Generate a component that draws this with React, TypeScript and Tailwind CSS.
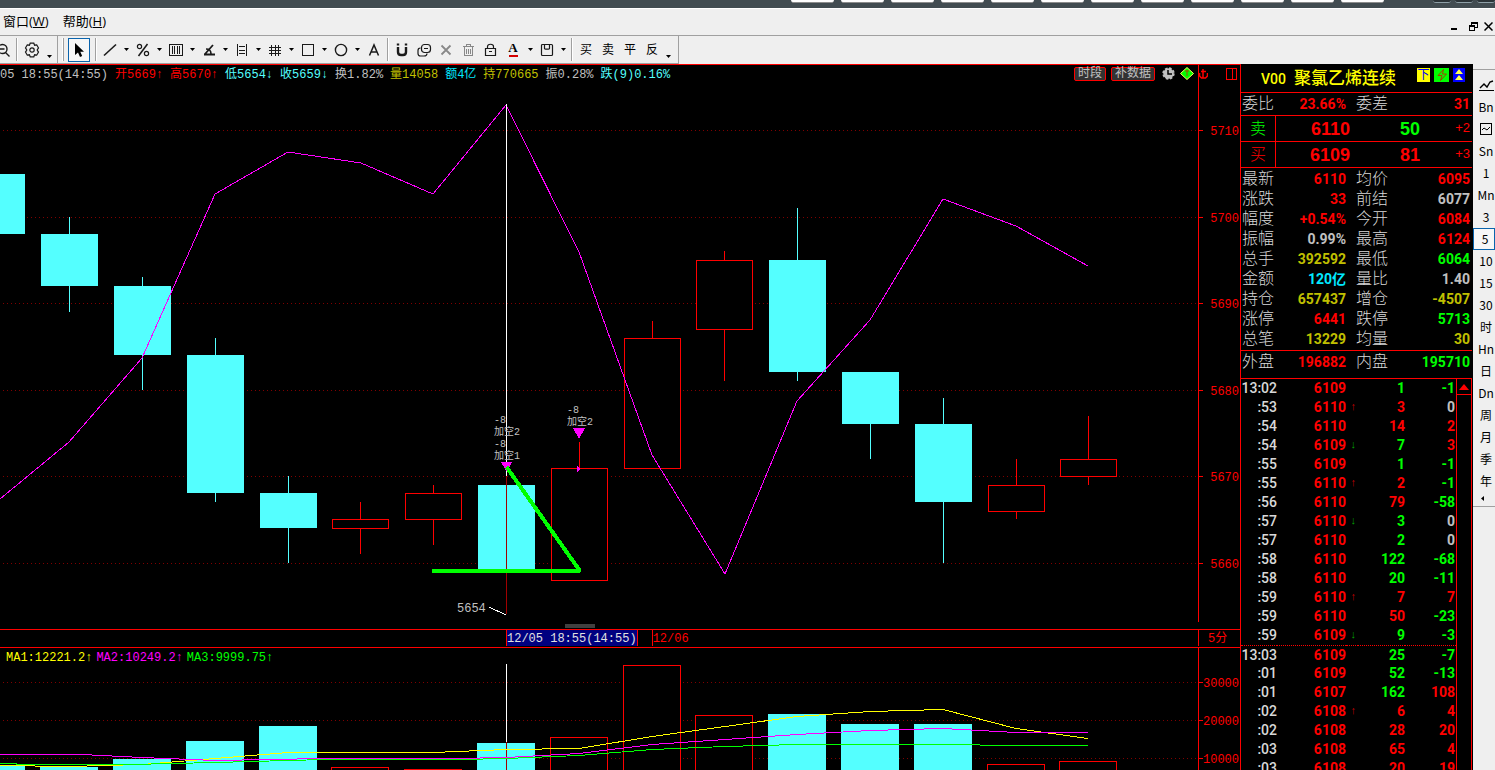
import React from "react";

type Candle = {
  open: number;
  high: number;
  low: number;
  close: number;
  volume: number;
};

const candles: Candle[] = [
  { open: 5705, high: 5705, low: 5698, close: 5698, volume: 8160 },
  { open: 5698, high: 5700, low: 5689, close: 5692, volume: 7630 },
  { open: 5692, high: 5693, low: 5680, close: 5684, volume: 9740 },
  { open: 5684, high: 5686, low: 5667, close: 5668, volume: 14470 },
  { open: 5668, high: 5670, low: 5660, close: 5664, volume: 18420 },
  { open: 5664, high: 5667, low: 5661, close: 5665, volume: 7630 },
  { open: 5665, high: 5669, low: 5662, close: 5668, volume: 7100 },
  { open: 5669, high: 5669, low: 5659, close: 5659, volume: 14058 },
  { open: 5658, high: 5674, low: 5658, close: 5671, volume: 15530 },
  { open: 5671, high: 5688, low: 5671, close: 5686, volume: 34500 },
  { open: 5687, high: 5696, low: 5681, close: 5695, volume: 21320 },
  { open: 5695, high: 5701, low: 5681, close: 5682, volume: 21580 },
  { open: 5682, high: 5682, low: 5672, close: 5676, volume: 18950 },
  { open: 5676, high: 5679, low: 5660, close: 5667, volume: 18950 },
  { open: 5666, high: 5672, low: 5665, close: 5669, volume: 8420 },
  { open: 5670, high: 5677, low: 5669, close: 5672, volume: 9210 },
];

const candleX = (i: number) => Math.round(72.8 * i - 3.6);
const priceY = (price: number) => Math.round(48.45 + (5710 - price) * 8.643);
const volumeY = (volume: number) => Math.round(94 - (volume - 10000) * 0.0038);

const priceTicks = [5710, 5700, 5690, 5680, 5670, 5660];
const volumeTicks = [30000, 20000, 10000];

const info = [
  { text: "开5669↑", color: "text-[#ff0000]" },
  { text: "高5670↑", color: "text-[#ff0000]" },
  { text: "低5654↓", color: "text-[#54ffff]" },
  { text: "收5659↓", color: "text-[#54ffff]" },
  { text: "换1.82%", color: "text-[#c0c0c0]" },
  { text: "量14058", color: "text-[#c0c000]" },
  { text: "额4亿", color: "text-[#00e8ff]" },
  { text: "持770665", color: "text-[#c0c000]" },
  { text: "振0.28%", color: "text-[#c0c0c0]" },
  { text: "跌(9)0.16%", color: "text-[#54ffff]" },
];

const red = "text-[#ff0000]";
const green = "text-[#00ff00]";
const gray = "text-[#c0c0c0]";
const yellow = "text-[#c0c000]";
const cyan = "text-[#00e8ff]";

const quotes = [
  ["最新", "6110", red, "均价", "6095", red],
  ["涨跌", "33", red, "前结", "6077", gray],
  ["幅度", "+0.54%", red, "今开", "6084", red],
  ["振幅", "0.99%", gray, "最高", "6124", red],
  ["总手", "392592", yellow, "最低", "6064", green],
  ["金额", "120亿", cyan, "量比", "1.40", gray],
  ["持仓", "657437", yellow, "增仓", "-4507", yellow],
  ["涨停", "6441", red, "跌停", "5713", green],
  ["总笔", "13229", yellow, "均量", "30", yellow],
];

const ticks = [
  ["13:02", "6109", "", "1", green, "-1", green],
  [":53", "6110", "↑", "3", red, "0", gray],
  [":54", "6110", "", "14", red, "2", red],
  [":54", "6109", "↓", "7", green, "3", red],
  [":55", "6109", "", "1", green, "-1", green],
  [":55", "6110", "↑", "2", red, "-1", green],
  [":56", "6110", "", "79", red, "-58", green],
  [":57", "6110", "↓", "3", green, "0", gray],
  [":57", "6110", "", "2", green, "0", gray],
  [":58", "6110", "", "122", green, "-68", green],
  [":58", "6110", "", "20", green, "-11", green],
  [":59", "6110", "↑", "7", red, "7", red],
  [":59", "6110", "", "50", red, "-23", green],
  [":59", "6109", "↓", "9", green, "-3", green],
  ["13:03", "6109", "", "25", green, "-7", green],
  [":01", "6109", "", "52", green, "-13", green],
  [":01", "6107", "", "162", green, "108", red],
  [":02", "6108", "↑", "6", red, "4", red],
  [":02", "6108", "", "28", red, "20", red],
  [":03", "6108", "", "65", red, "4", red],
  [":03", "6108", "", "20", red, "19", red],
];

const periods = [
  "trend",
  "Bn",
  "tick",
  "Sn",
  "1",
  "Mn",
  "3",
  "5",
  "10",
  "15",
  "30",
  "时",
  "Hn",
  "日",
  "Dn",
  "周",
  "月",
  "季",
  "年",
];

const TitleBar = () => (
  <div className="flex h-2 justify-end overflow-hidden bg-[#424c51]">
    <div className="flex gap-[7px]">
      {Array.from({ length: 12 }, (_, i) => (
        <div
          key={i}
          className="h-[3px] w-[43px] rounded-b-sm border-b border-[#8d8d8d] bg-white"
        />
      ))}
    </div>
    <div className="ml-[49px] flex gap-1">
      {[0, 1, 2].map((i) => (
        <div
          key={i}
          className="h-[3px] w-[18px] rounded-b-sm border-b border-[#8fa0a8] bg-[#2c3438]"
        />
      ))}
    </div>
  </div>
);

const MenuBar = () => (
  <div className="flex h-7 items-center justify-between border-t border-b border-t-white border-b-[#a0a0a0] font-['Open_Sans','Noto_Sans_CJK_SC',sans-serif] text-[13px] text-black">
    <nav className="flex gap-3.5 pl-[3px]">
      <button type="button">
        窗口(<span className="underline">W</span>)
      </button>
      <button type="button">
        帮助(<span className="underline">H</span>)
      </button>
    </nav>
    <div className="flex gap-1.5 pr-0.5 pt-2">
      <button type="button" aria-label="最小化" className="mr-1">
        <svg width="9" height="9" shapeRendering="crispEdges">
          <rect x="1" y="6" width="6" height="2" />
        </svg>
      </button>
      <button type="button" aria-label="还原">
        <svg
          width="9"
          height="9"
          fill="none"
          stroke="#000"
          shapeRendering="crispEdges"
        >
          <path d="M2.5 3V.5h6v5H6M2 1.5h6M.5 3.5h5v5h-5zM0 4.5h6" />
        </svg>
      </button>
      <button type="button" aria-label="关闭">
        <svg width="9" height="9" stroke="#000" strokeWidth="1.5">
          <path d="M.5.5l8 8M8.5.5l-8 8" />
        </svg>
      </button>
    </div>
  </div>
);

const Icon = ({ children }: { children: React.ReactNode }) => (
  <svg
    width="16"
    height="16"
    viewBox="0 0 16 16"
    fill="none"
    stroke="#1a1a1a"
    strokeWidth="1.2"
  >
    {children}
  </svg>
);

const Tool = ({
  label,
  menu,
  children,
}: {
  label: string;
  menu?: boolean;
  children: React.ReactNode;
}) => (
  <>
    <button
      type="button"
      aria-label={label}
      className="flex h-6 w-[22px] shrink-0 items-center justify-center"
    >
      {children}
    </button>
    {menu && <Caret label={label} />}
  </>
);

const Caret = ({ label, low }: { label: string; low?: boolean }) => (
  <button
    type="button"
    aria-label={`${label}菜单`}
    className={
      low
        ? "flex h-6 w-[11px] shrink-0 items-end justify-center pb-1"
        : "flex h-6 w-[11px] shrink-0 items-center justify-center"
    }
  >
    <svg width="5" height="3">
      <path d="M0 0h5L2.500 3z" fill="#000" />
    </svg>
  </button>
);

const Separator = () => (
  <div className="h-[23px] w-1.5 shrink-0 pl-0.5">
    <div className="h-full w-0.5 border-l border-r border-l-[#a0a0a0] border-r-white" />
  </div>
);

const Toolbar = () => (
  <div className="flex h-7 items-center text-black">
    <div className="flex h-full w-[58px] shrink-0 items-center overflow-hidden border-r border-b border-[#a0a0a0]">
      <button type="button" aria-label="缩小" className="w-3.5 shrink-0">
        <svg
          width="10"
          height="16"
          viewBox="0 0 10 16"
          fill="none"
          stroke="#1a1a1a"
          strokeWidth="1.4"
        >
          <circle cx="2.500" cy="7" r="4.500" />
          <path d="M0 7h4.500M5.500 10.500l4 4" />
        </svg>
      </button>
      <Separator />
      <button
        type="button"
        aria-label="设置"
        className="flex w-[24px] shrink-0 justify-center"
      >
        <Icon>
          <path d="M6.200 1.200h3.600l.8 2 2.100-.4 1.800 3.100L13.200 8l1.300 2.100-1.800 3.100-2.100-.4-.8 2H6.200l-.8-2-2.100.4-1.800-3.100L2.800 8 1.500 5.900l1.800-3.100 2.100.4z" />
          <circle cx="8" cy="8" r="2.200" />
        </Icon>
      </button>
      <Caret label="设置" low />
    </div>
    <div className="flex h-full shrink-0 items-center border-r border-b border-[#a0a0a0] pr-1 pl-1">
      <div className="mr-1 h-[23px] w-0.5 border-r border-l border-r-[#a0a0a0] border-l-white" />
      <button
        type="button"
        aria-label="选择"
        className="flex h-6 w-[22px] items-center justify-center border border-[#0a64ad] bg-[#f7f7f7]"
      >
        <svg width="12" height="16" viewBox="0 0 12 16" fill="#000">
          <path d="M2 1v12l3-2.500L7 15l2.200-1L7.300 9.700H11z" />
        </svg>
      </button>
      <div className="w-[3px]" />
      <Separator />
      <Tool label="直线" menu>
        <Icon>
          <path d="M2 13.500L14 2.500" strokeWidth="1.6" />
        </Icon>
      </Tool>
      <Tool label="百分比" menu>
        <Icon>
          <circle cx="4.500" cy="4.500" r="2.100" />
          <circle cx="11.500" cy="11.500" r="2.100" />
          <path d="M12.500 2l-9 12" strokeWidth="1.500" />
        </Icon>
      </Tool>
      <Tool label="周期线" menu>
        <Icon>
          <path
            d="M1.500 2.500h13v11h-13zM4.500 4v8M6.500 4v8M9.500 4v8M11.500 4v8"
            strokeWidth="1"
            shapeRendering="crispEdges"
          />
        </Icon>
      </Tool>
      <Tool label="角度" menu>
        <Icon>
          <path d="M3 12.500h11M4 12l8-9" strokeWidth="1.8" />
          <path d="M5 7c4 0 5 2 5 5" strokeWidth="1.600" />
        </Icon>
      </Tool>
      <Tool label="黄金分割" menu>
        <Icon>
          <path
            d="M3.500 2v12M12.500 2v12M5 4.500h6M5 8.500h6M5 11.500h6"
            strokeWidth="1"
            shapeRendering="crispEdges"
          />
        </Icon>
      </Tool>
      <Tool label="网格" menu>
        <Icon>
          <path
            d="M4.500 3v11M8.500 3v11M11.500 3v11M2 5.500h12M2 8.500h12M2 11.500h12"
            strokeWidth="1"
            shapeRendering="crispEdges"
          />
        </Icon>
      </Tool>
      <Tool label="矩形" menu>
        <Icon>
          <path
            d="M2.500 2.500h11v11h-11z"
            strokeWidth="1"
            shapeRendering="crispEdges"
          />
        </Icon>
      </Tool>
      <Tool label="圆" menu>
        <Icon>
          <circle cx="8" cy="8" r="5.600" strokeWidth="1.4" />
        </Icon>
      </Tool>
      <Tool label="文字">
        <Icon>
          <path d="M3.500 13.500L8 3l4.500 10.500M5 10h6" strokeWidth="1.500" />
        </Icon>
      </Tool>
      <Separator />
      <Tool label="磁铁">
        <Icon>
          <path d="M4 5v5c0 2 1 3 3 3h2c2 0 3-1 3-3V5" strokeWidth="2.400" />
          <path d="M4 1.500v2M12 1.500v2" strokeWidth="2.400" />
        </Icon>
      </Tool>
      <Tool label="复制">
        <Icon>
          <rect x="5.500" y="2.500" width="9" height="8" rx="3" />
          <path d="M4.500 6C2.500 6 2 7 2 8.500v3C2 13 3 14 4.500 14H8c2 0 3-1 3-2.500M8 6.500h4" />
        </Icon>
      </Tool>
      <Tool label="清除">
        <Icon>
          <path d="M3.500 3.500l9 9M12.500 3.500l-9 9" stroke="#888" strokeWidth="1.800" />
        </Icon>
      </Tool>
      <Tool label="删除">
        <Icon>
          <path
            d="M3 4.500h11M6.500 4V2.500h4V4M4.500 5v8.500h8V5M6.500 7v5M8.500 7v5M10.500 7v5"
            stroke="#888"
            strokeWidth="1"
            shapeRendering="crispEdges"
          />
        </Icon>
      </Tool>
      <Tool label="锁定">
        <Icon>
          <path d="M3.500 6.500h10v7h-10zM5.500 6V4.500c0-3 6-3 6 0V6M7 9.500h3" />
        </Icon>
      </Tool>
      <button
        type="button"
        aria-label="颜色"
        className="flex h-6 w-6 flex-col items-center justify-center font-['Liberation_Serif',serif] text-[13px] leading-[10px] font-bold"
      >
        A
        <span className="mt-0.5 h-0.5 w-[9px] bg-[#d40000]" />
      </button>
      <Caret label="颜色" />
      <Tool label="保存" menu>
        <Icon>
          <rect x="2.500" y="2.500" width="11" height="11" rx="1" />
          <path d="M5.500 3v3.500c0 1 5 1 5 0V3" />
        </Icon>
      </Tool>
      <Separator />
      {["买", "卖", "平", "反"].map((label) => (
        <button
          key={label}
          type="button"
          className="w-[22px] pb-0.5 font-['Noto_Sans_CJK_SC',sans-serif] text-xs leading-[22px]"
        >
          {label}
        </button>
      ))}
      <Caret label="交易" low />
    </div>
  </div>
);

const InfoRow = () => (
  <div className="flex h-[17px] shrink-0">
    <div className="flex min-w-0 flex-1 items-center justify-between overflow-hidden whitespace-nowrap">
      <div className="flex gap-[7px] pt-0.5">
        <span className="text-[#c0c0c0]">05 18:55(14:55)</span>
        {info.map((item) => (
          <span key={item.text} className={item.color}>
            {item.text}
          </span>
        ))}
      </div>
      <div className="flex items-center gap-[5px] pr-1">
        <button
          type="button"
          className="h-3.5 rounded-xs border border-[#ff0000] bg-[#333] px-[3px] text-xs leading-3 text-[#c0c0c0]"
        >
          时段
        </button>
        <button
          type="button"
          className="h-3.5 rounded-xs border border-[#ff0000] bg-[#333] px-[3px] text-xs leading-3 text-[#c0c0c0]"
        >
          补数据
        </button>
        <button type="button" aria-label="设置" className="ml-0.5">
          <svg width="13" height="13" viewBox="0 0 13 13">
            <circle
              cx="6.500"
              cy="6.500"
              r="5.200"
              fill="#c0c0c0"
              stroke="#c0c0c0"
              strokeWidth="2"
              strokeDasharray="2.500 1.580"
            />
            <path d="M6 3v4h4" fill="none" stroke="#000" strokeWidth="1.500" />
          </svg>
        </button>
        <button type="button" aria-label="提示">
          <svg width="14" height="13" viewBox="0 0 14 13">
            <path d="M7 .5L13.500 6.500 7 12.500.5 6.500z" fill="#00ff00" stroke="#ffff54" />
            <path d="M5 4h4M7 3v6" stroke="#a05000" />
          </svg>
        </button>
      </div>
    </div>
    <div className="flex w-[42px] items-center justify-between border-l border-[#ff0000] pr-0.5">
      <svg width="9" height="10" viewBox="0 0 9 10" fill="none" stroke="#f00">
        <path d="M4 0v9M2 2.500h5M.5 4v3l2 2h4l2-2V4" strokeWidth="1.500" />
      </svg>
      <svg
        width="12"
        height="12"
        fill="none"
        stroke="#f00"
        shapeRendering="crispEdges"
      >
        <path d="M.5.5h10v11H.5zM6.500 1v10" />
      </svg>
    </div>
  </div>
);

const GridLines = ({ rows }: { rows: number[] }) => (
  <>
    {rows.map((y) => (
      <line
        key={y}
        x1="0"
        x2="100%"
        y1={y + 0.5}
        y2={y + 0.5}
        stroke="#800000"
        strokeDasharray="1 3"
        strokeDashoffset="1"
      />
    ))}
  </>
);

const Note = ({ x, y, text }: { x: number; y: number; text: string }) => (
  <text x={x} y={y} fill="#c0c0c0" className="text-[10px]">
    {text}
  </text>
);

const PriceChart = () => (
  <svg
    className="h-full min-w-0 flex-1"
    shapeRendering="crispEdges"
    fill="none"
  >
    <GridLines rows={priceTicks.map(priceY)} />
    {candles.map((c, i) => {
      const x = candleX(i);
      const top = priceY(Math.max(c.open, c.close));
      const bottom = priceY(Math.min(c.open, c.close));
      const up = c.close > c.open;
      return (
        <g key={i} stroke={up ? "#ff0000" : "#54ffff"}>
          <path
            d={`M${x + 0.5} ${priceY(c.high)}V${top}M${x + 0.5} ${bottom}V${priceY(c.low)}`}
          />
          <rect
            x={x - 27.5}
            y={top + 0.5}
            width="56"
            height={bottom - top - (up ? 0 : 1)}
            fill={up ? "#000" : "#54ffff"}
          />
        </g>
      );
    })}
    <polyline
      stroke="#ff00ff"
      points="0,417 69,360 142,276 215,112 288,70 361,81 433,112 506,23 579,170 652,373 725,492 797,319 870,238 943,117 1016,144 1088,184"
    />
    <path d="M506.500 22V394" stroke="#fff" />
    <path d="M506.500 394V532" stroke="#a00000" />
    <path d="M501 380h11l-5 10zM573 346h12l-6 11zM577 384l3 3-3 3z" fill="#f0f" />
    <path
      d="M432 489H580L506.500 385"
      stroke="#00ff00"
      strokeWidth="4"
      strokeLinejoin="bevel"
    />
    <Note x={494} y={341} text="-8" />
    <Note x={494} y={353} text="加空2" />
    <Note x={494} y={365} text="-8" />
    <Note x={494} y={377} text="加空1" />
    <Note x={567} y={331} text="-8" />
    <Note x={567} y={343} text="加空2" />
    <text x="457" y="530" fill="#c0c0c0">
      5654
    </text>
    <path d="M489 525L506 533" stroke="#fff" />
    <rect x="565" y="542" width="30" height="4" fill="#404040" />
  </svg>
);

const VolumeChart = () => (
  <svg
    className="h-full min-w-0 flex-1"
    shapeRendering="crispEdges"
    fill="none"
  >
    <GridLines rows={volumeTicks.map((v) => volumeY(v))} />
    {candles.map((c, i) => {
      const x = candleX(i);
      const up = c.close > c.open;
      return (
        <rect
          key={i}
          x={x - 28.5}
          y={volumeY(c.volume) + 0.5}
          width="57"
          height="400"
          fill={up ? "#000" : "#54ffff"}
          stroke={up ? "#ff0000" : "#54ffff"}
        />
      );
    })}
    <path d="M506.500 0V78" stroke="#fff" />
    <path d="M506.500 78V400" stroke="#a00000" />
    <polyline
      stroke="#ffff00"
      points="0,101.5 69,102.5 142,100.5 215,94.500 288,88.500 433,88.500 506,85.500 579,84.500 652,72.500 725,62.500 797,52.500 870,47.500 943,45.500 1016,64.500 1088,74.500"
    />
    <polyline
      stroke="#ff00ff"
      points="0,90.500 82,90.500 142,93.500 215,96.500 325,94.500 455,94.500 506,93.500 579,89.500 652,80.500 725,75.500 797,70.500 870,66.500 943,64.500 1016,68.500 1088,68.500"
    />
    <polyline
      stroke="#00ff00"
      points="0,99.500 33,100.500 130,100.500 215,98.500 325,95.500 460,95.500 506,94.500 579,91.500 652,85.500 725,82.500 797,80.500 943,80.500 1016,81.500 1088,81.500"
    />
  </svg>
);

const Axis = ({
  values,
  scale,
}: {
  values: number[];
  scale: (value: number) => number;
}) => (
  <svg className="h-full w-[41px]" shapeRendering="crispEdges" fill="#ff0000">
    {values.map((value) => (
      <g key={value}>
        <rect x="0" y={scale(value)} width="4" height="1" />
        <text x="40" y={scale(value) + 5} textAnchor="end">
          {value}
        </text>
      </g>
    ))}
  </svg>
);

const ChartPanel = () => (
  <section className="flex min-w-0 flex-1 flex-col border-t border-[#ff0000] font-['Liberation_Mono','Noto_Sans_CJK_SC',monospace] text-xs">
    <InfoRow />
    <div className="flex h-[547px] shrink-0">
      <PriceChart />
      <div className="mb-[7px] border-l border-[#ff0000]">
        <Axis values={priceTicks} scale={priceY} />
      </div>
    </div>
    <div className="flex h-[19px] shrink-0 border-y border-[#ff0000] leading-[18px] whitespace-nowrap">
      <div className="flex min-w-0 flex-1 overflow-hidden">
        <div className="ml-[506px] h-4 border-x border-[#ff0000] bg-[#000080] text-[#e0e0e0]">
          12/05 18:55(14:55)
        </div>
        <div className="ml-[14px] h-4 border-l border-[#ff0000] text-[#ff0000]">
          12/06
        </div>
      </div>
      <div className="h-4 w-[42px] border-l border-[#ff0000] pl-[9px] text-[#ff0000]">
        5分
      </div>
    </div>
    <div className="flex min-h-0 flex-1">
      <div className="flex min-w-0 flex-1 flex-col">
        <div className="flex h-4 shrink-0 gap-1 pl-1.5 leading-5 whitespace-nowrap">
          <span className="text-[#ffff00]">MA1:12221.2↑</span>
          <span className="text-[#ff00ff]">MA2:10249.2↑</span>
          <span className="text-[#00ff00]">MA3:9999.75↑</span>
        </div>
        <div className="flex min-h-0 flex-1">
          <VolumeChart />
        </div>
      </div>
      <div className="border-l border-[#ff0000] pt-4">
        <Axis values={volumeTicks} scale={volumeY} />
      </div>
    </div>
  </section>
);

const QuoteRow = ({ row }: { row: string[] }) => (
  <tr className="h-5">
    <th className="w-[34px] pt-0.5 pl-px text-left text-base leading-[18px] font-light text-[#d8d8d8]">
      {row[0]}
    </th>
    <td className={`w-[71px] pt-0.5 text-right leading-[18px] ${row[2]}`}>
      {row[1]}
    </td>
    <th className="w-[44px] pt-0.5 pl-2.5 text-left text-base leading-[18px] font-light text-[#d8d8d8]">
      {row[3]}
    </th>
    <td className={`pt-0.5 pr-0.5 text-right leading-[18px] ${row[5]}`}>
      {row[4]}
    </td>
  </tr>
);

const OrderRow = ({
  label,
  price,
  volume,
  change,
  labelColor,
  volumeColor,
}: {
  label: string;
  price: string;
  volume: string;
  change: string;
  labelColor: string;
  volumeColor: string;
}) => (
  <div className="flex h-[26px] items-center border-t border-[#ff0000] font-['Liberation_Sans','Noto_Sans_CJK_SC',sans-serif] text-lg font-bold">
    <span
      className={`h-full w-[35px] border-r border-[#ff0000] text-center text-base leading-[25px] font-light ${labelColor}`}
    >
      {label}
    </span>
    <span className="w-[74px] text-right text-[#ff0000]">{price}</span>
    <span className={`w-[70px] text-right ${volumeColor}`}>{volume}</span>
    <span className="flex-1 pr-0.5 text-right text-[13px] font-normal text-[#ff0000]">
      {change}
    </span>
  </div>
);

const QuotePanel = () => (
  <section className="flex w-[233px] shrink-0 flex-col border-l border-[#ff0000] pr-px font-['Roboto','Noto_Sans_CJK_SC',sans-serif] text-sm font-bold">
    <div className="flex h-7 shrink-0 items-center pt-px pr-[7px] pl-5">
      <h1 className="flex flex-1 items-center gap-2 text-[17px] font-medium whitespace-nowrap text-[#ffff00]">
        <span className="text-sm">V00</span>
        聚氯乙烯连续
      </h1>
      <div className="mb-2 flex gap-1">
        <button
          type="button"
          className="h-3.5 w-[13px] bg-[#ffff00] text-xs leading-3.5 font-normal text-[#0000ff]"
        >
          下
        </button>
        <button
          type="button"
          aria-label="闪电"
          className="flex h-3.5 w-[15px] items-center justify-center bg-[#00ff00]"
        >
          <svg width="10" height="12" fill="none" stroke="#a04000">
            <path d="M6.500.5L1 6.500h4L3.500 11.500l6-6.500h-4z" />
          </svg>
        </button>
        <button
          type="button"
          aria-label="上移"
          className="flex h-3.5 w-3 items-center justify-center bg-[#0000ff]"
        >
          <svg width="8" height="12" fill="#ffff54">
            <path d="M4 0l4 5H0zM4 6l4 5H0z" />
          </svg>
        </button>
      </div>
    </div>
    <table className="w-full shrink-0 table-fixed border-t border-[#ff0000]">
      <tbody>
        <QuoteRow row={["委比", "23.66%", red, "委差", "31", red]} />
      </tbody>
    </table>
    <div className="pt-0.5">
      <OrderRow
        label="卖"
        price="6110"
        volume="50"
        change="+2"
        labelColor="text-[#00ff00]"
        volumeColor="text-[#00ff00]"
      />
      <OrderRow
        label="买"
        price="6109"
        volume="81"
        change="+3"
        labelColor="text-[#ff0000]"
        volumeColor="text-[#ff0000]"
      />
    </div>
    <table className="w-full shrink-0 table-fixed border-t border-[#ff0000]">
      <tbody>
        {quotes.map((row) => (
          <QuoteRow key={row[0]} row={row} />
        ))}
      </tbody>
    </table>
    <div className="mt-0.5 h-7 shrink-0 border-t border-[#ff0000]">
      <table className="w-full table-fixed">
        <tbody>
          <QuoteRow row={["外盘", "196882", red, "内盘", "195710", green]} />
        </tbody>
      </table>
    </div>
    <div className="flex min-h-0 flex-1 overflow-hidden border-t border-[#ff0000]">
      <div className="min-w-0 flex-1">
        <table className="w-full table-fixed">
          <tbody>
            {ticks.map((row, i) => (
              <tr
                key={i}
                className={
                  row[0] === "13:03"
                    ? "h-[19px] border-t border-dotted border-[#ff0000] align-top"
                    : "h-[19px] align-top"
                }
              >
                <td className="w-9 text-right leading-[18px] font-medium text-[#d8d8d8]">
                  {row[0]}
                </td>
                <td className="w-[69px] text-right leading-[18px] text-[#ff0000]">
                  {row[1]}
                </td>
                <td
                  className={
                    row[2] === "↑"
                      ? "w-3 pl-1 font-['Liberation_Mono',monospace] text-[11px] leading-[18px] text-[#c00000]"
                      : "w-3 pl-1 font-['Liberation_Mono',monospace] text-[11px] leading-[18px] text-[#00a000]"
                  }
                >
                  {row[2]}
                </td>
                <td className={`w-[47px] text-right leading-[18px] ${row[4]}`}>
                  {row[3]}
                </td>
                <td className={`pr-px text-right leading-[18px] ${row[6]}`}>
                  {row[5]}
                </td>
              </tr>
            ))}
          </tbody>
        </table>
      </div>
      <div className="w-4 border-x border-[#ff0000]">
        <button
          type="button"
          aria-label="向上滚动"
          className="flex h-4 w-full items-center justify-center border-b border-[#ff0000]"
        >
          <svg width="10" height="6">
            <path d="M5 0l5 6H0z" fill="#f00" />
          </svg>
        </button>
      </div>
    </div>
  </section>
);

const PeriodBar = () => (
  <aside className="w-[22px] shrink-0 bg-[#efefef] font-['Noto_Sans_CJK_SC',sans-serif] text-xs text-black">
    <div className="overflow-hidden border-b border-[#a0a0a0] pb-0.5">
      <div className="mt-[5px] mb-1 border-t border-[#a0a0a0]" />
      {periods.map((period) => (
        <button
          key={period}
          type="button"
          aria-label={period}
          className={
            period === "5"
              ? "flex h-[22px] w-full items-center justify-center border border-[#0a64ad] bg-[#f7f7f7] pl-0.5"
              : "flex h-[22px] w-full items-center justify-center pl-1"
          }
        >
          {period === "trend" ? (
            <svg width="15" height="13" fill="none" stroke="#000">
              <path d="M1 9l4-4 3 3 3-5 3-1" strokeWidth="1.400" />
              <path d="M0 11.500h15" />
            </svg>
          ) : period === "tick" ? (
            <svg width="12" height="12" fill="none" stroke="#000">
              <rect x=".5" y=".5" width="11" height="11" />
              <path d="M2 7l2-2 3 2 3-3" />
            </svg>
          ) : (
            period
          )}
        </button>
      ))}
      <button
        type="button"
        aria-label="更多"
        className="flex h-3 w-full items-center pl-2"
      >
        <svg width="3" height="5">
          <path d="M3 0v5L0 2.500z" />
        </svg>
      </button>
    </div>
  </aside>
);

export default function App() {
  return (
    <div className="flex h-screen flex-col overflow-hidden bg-[#efefef]">
      <TitleBar />
      <MenuBar />
      <Toolbar />
      <main className="flex min-h-0 flex-1 bg-black">
        <ChartPanel />
        <QuotePanel />
        <PeriodBar />
      </main>
    </div>
  );
}
